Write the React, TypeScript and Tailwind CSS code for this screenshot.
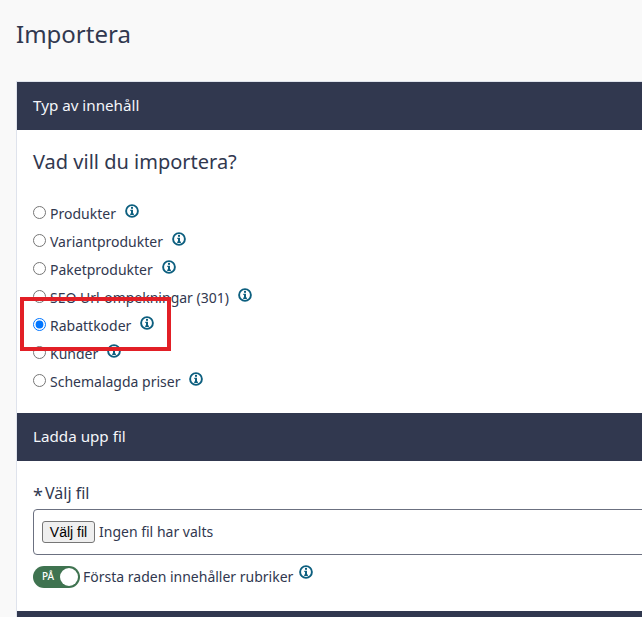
const font = { fontFamily: '"Noto Sans", sans-serif' };

function Info() {
  return (
    <svg width="14" height="14" viewBox="0 0 14 14" className="shrink-0" aria-hidden="true">
      <circle cx="7" cy="7" r="5.9" fill="none" stroke="#0d5f7f" strokeWidth="1.9" />
      <rect x="6" y="2.9" width="2" height="1.9" fill="#0d5f7f" />
      <path d="M5.3 5.8H8V9.6H8.9V11H5.2V9.6H6V7.1H5.3Z" fill="#0d5f7f" />
    </svg>
  );
}

const options = [
  { label: "Produkter" },
  { label: "Variantprodukter" },
  { label: "Paketprodukter" },
  { label: "SEO Url-ompekningar (301)" },
  { label: "Rabattkoder", checked: true },
  { label: "Kunder" },
  { label: "Schemalagda priser" },
];

function Header({ children }: { children: string }) {
  return (
    <div className="h-12 flex items-center pl-4 pb-[2px] bg-[#31384f] text-[#f4f6fa] text-[15.2px]">{children}</div>
  );
}

export default function App() {
  return (
    <div className="relative w-[642px] h-[617px] overflow-hidden bg-[#f9f9f9] text-[#31384f]" style={font}>
      <h1 className="h-[81px] pl-4 pt-[17px] text-[24px] leading-[34px]">Importera</h1>
      <div className="ml-4 w-[720px] border-l border-t border-[#dfe3ec] bg-white">
        <Header>Typ av innehåll</Header>
        <div className="h-[283px] pl-4 pt-5">
          <h2 className="text-[20px] leading-6 h-[48px]">Vad vill du importera?</h2>
          <div className="flex flex-col">
            {options.map((o) => (
              <label key={o.label} className="h-7 flex items-center text-[14px]">
                <input type="radio" name="kind" defaultChecked={o.checked} className="w-[13px] h-[13px] m-0 mr-[4px] mb-[-1px]" />
                <span className="leading-5 mt-[3px]">{o.label}</span>
                <span className="ml-[9px] mb-[3px]"><Info /></span>
              </label>
            ))}
          </div>
        </div>
        <Header>Ladda upp fil</Header>
        <div className="h-[150px] pl-4 pt-5">
          <div className="h-6 flex items-center text-base leading-6">
            <span className="w-3 text-[18px] leading-6 mt-[3px]">*</span>
            <span>Välj fil</span>
          </div>
          <div className="mt-1 h-[46px] flex items-center pl-2 border border-[#6b7080] rounded-[4px] text-[14px]">
            <button type="button" className="h-[22px] w-[53px] border border-[#767676] rounded-[3px] bg-[#efefef] text-black text-[14px] leading-none" style={{ fontFamily: '"Liberation Sans", sans-serif' }}>Välj fil</button>
            <span className="ml-[4px] mb-px">Ingen fil har valts</span>
          </div>
          <div className="mt-[10px] flex items-center text-[14px]">
            <div className="relative w-[47px] h-[22px] rounded-full bg-[#3f7350] text-white shrink-0">
              <span className="absolute left-[9px] top-[3px] text-[10px] leading-[14px] font-medium">PÅ</span>
              <span className="absolute right-[2px] top-[2px] w-[18px] h-[18px] rounded-full bg-white" />
            </div>
            <span className="ml-[3px] leading-5">Första raden innehåller rubriker</span>
            <span className="ml-[6px] mb-[10px]"><Info /></span>
          </div>
        </div>
        <div className="h-12 bg-[#31384f]" />
      </div>
      <div className="absolute left-[20px] top-[297px] w-[151px] h-[54px] border-4 border-[#e21f26]" />
    </div>
  );
}
